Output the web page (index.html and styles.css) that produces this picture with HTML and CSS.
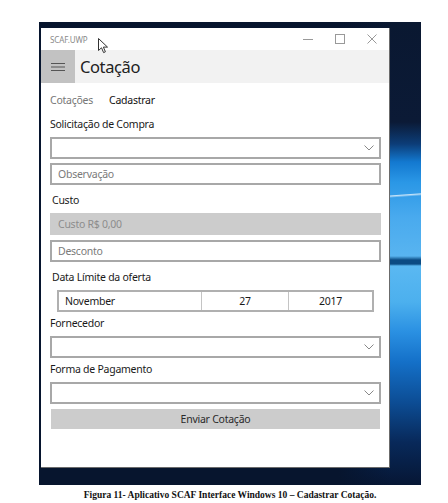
FILE: index.html
```html
<!DOCTYPE html>
<html lang="pt">
<head>
<meta charset="utf-8">
<link rel="stylesheet" href="styles.css">
</head>
<body>
<div class="desktop">
  <div class="window">
    <div class="titlebar">
      <span class="app-name">SCAF.UWP</span>
      <div class="controls">
        <svg class="ctl" width="12" height="12" viewBox="0 0 12 12"><path d="M1 6.5H11" stroke="#999" stroke-width="1"/></svg>
        <svg class="ctl" width="12" height="12" viewBox="0 0 12 12"><rect x="1.5" y="1.5" width="9" height="9" fill="none" stroke="#999" stroke-width="1"/></svg>
        <svg class="ctl" width="12" height="12" viewBox="0 0 12 12"><path d="M1.5 1.5L10.5 10.5M10.5 1.5L1.5 10.5" stroke="#999" stroke-width="1"/></svg>
      </div>
    </div>
    <div class="header">
      <div class="hamburger">
        <svg width="14" height="8" viewBox="0 0 14 8"><path d="M0 0.5H14M0 4H14M0 7.5H14" stroke="#555" stroke-width="1"/></svg>
      </div>
      <h1 class="page-title">Cotação</h1>
    </div>
    <div class="content">
      <div class="tabs">
        <span class="tab">Cotações</span>
        <span class="tab active">Cadastrar</span>
      </div>
      <div class="label l-first">Solicitação de Compra</div>
      <div class="field combo f-first"><svg class="chev" width="10" height="6" viewBox="0 0 10 6"><path d="M0.5 0.5L5 5L9.5 0.5" fill="none" stroke="#888" stroke-width="1"/></svg></div>
      <div class="field f-obs"><span class="ph">Observação</span></div>
      <div class="label l-ind l-custo">Custo</div>
      <div class="field disabled f-mid"><span class="ph dis">Custo R$ 0,00</span></div>
      <div class="field f-mid"><span class="ph">Desconto</span></div>
      <div class="label l-ind l-custo">Data Límite da oferta</div>
      <div class="date f-mid">
        <div class="seg month">November</div>
        <div class="seg day">27</div>
        <div class="seg year">2017</div>
      </div>
      <div class="label l-tight">Fornecedor</div>
      <div class="field combo f-mid"><svg class="chev" width="10" height="6" viewBox="0 0 10 6"><path d="M0.5 0.5L5 5L9.5 0.5" fill="none" stroke="#888" stroke-width="1"/></svg></div>
      <div class="label l-tight">Forma de Pagamento</div>
      <div class="field combo f-mid"><svg class="chev" width="10" height="6" viewBox="0 0 10 6"><path d="M0.5 0.5L5 5L9.5 0.5" fill="none" stroke="#888" stroke-width="1"/></svg></div>
      <div class="button">Enviar Cotação</div>
    </div>
    <svg class="cursor" width="11" height="16" viewBox="0 0 11 16"><path d="M0.5 0.5V12.5L3.5 9.8L5.6 14.6L7.4 13.8L5.4 9.1H9.5Z" fill="#fff" stroke="#333" stroke-width="1" stroke-linejoin="round"/></svg>
  </div>
</div>
<p class="caption">Figura 11- Aplicativo SCAF Interface Windows 10 – Cadastrar Cotação.</p>
</body>
</html>
```

FILE: styles.css
```css
html, body {
  margin: 0;
  padding: 0;
  background: #ffffff;
}
body {
  width: 448px;
  height: 503px;
  overflow: hidden;
  font-family: "Noto Sans", "Open Sans", sans-serif;
}
.desktop {
  margin: 22px 0 0 39px;
  width: 382px;
  height: 463px;
  box-sizing: border-box;
  padding: 6px 0 0 2px;
  background:
    linear-gradient(to right, #07152e 0px, #07152e 300px, rgba(7,21,46,0) 352px),
    linear-gradient(176deg, transparent 0 197px, rgba(255,255,255,0.7) 198px, transparent 200px, transparent 100%),
    linear-gradient(to bottom,
      #0a1831 0px, #0b1a36 100px, #0c3d78 122px, #1379d0 140px, #2a97e6 160px,
      #49aaee 195px, #58b4f0 234px, #0b4b83 238px, #0b4b83 242px, #5ab8f2 244px,
      #4cb0ee 280px, #2a90e2 310px, #1470c8 340px, #0c4d95 380px, #08295a 420px, #061634 463px);
}
.window {
  position: relative;
  width: 349px;
  height: 440px;
  box-sizing: border-box;
  background: #ffffff;
  border-right: 1px solid #6b6b6b;
  border-bottom: 1px solid #6b6b6b;
  display: flex;
  flex-direction: column;
}
.titlebar {
  height: 22px;
  display: flex;
  align-items: center;
  justify-content: space-between;
  padding-left: 9px;
}
.app-name {
  font-size: 8px;
  color: #8a8a8a;
  letter-spacing: -0.1px;
}
.controls {
  display: flex;
  align-items: center;
  gap: 20px;
  padding-right: 11px;
}
.ctl { display: block; }
.header {
  height: 33px;
  background: #f2f2f2;
  display: flex;
  align-items: center;
}
.hamburger {
  width: 34px;
  height: 33px;
  background: #c2c2c2;
  display: flex;
  align-items: center;
  justify-content: center;
}
.hamburger svg { display: block; }
.page-title {
  margin: 0 0 0 5px;
  font-size: 16.5px;
  font-weight: 400;
  color: #222;
  letter-spacing: -0.4px;
}
.content {
  padding: 0 8px 0 9px;
  display: flex;
  flex-direction: column;
  letter-spacing: -0.25px;
}
.tabs {
  height: 20px;
  margin-top: 7px;
  display: flex;
  align-items: center;
  gap: 16px;
  font-size: 10.5px;
}
.tab { color: #767676; }
.tab.active { color: #111; }
.label {
  height: 16px;
  line-height: 16px;
  font-size: 10.5px;
  color: #1a1a1a;
}
.l-first { margin-top: 6px; }
.l-ind { padding-left: 2px; }
.l-custo { margin-top: 7px; }
.l-tight { margin-top: 3px; }
.field {
  position: relative;
  height: 22px;
  box-sizing: border-box;
  border: 2px solid #a8a8a8;
  display: flex;
  align-items: center;
  padding-left: 6px;
}
.f-first { margin-top: 5px; }
.f-obs { margin-top: 4px; }
.f-mid { margin-top: 5px; }
.field.disabled {
  background: #cccccc;
  border-color: #cccccc;
}
.ph {
  font-size: 10.5px;
  color: #7a7a7a;
}
.ph.dis { color: #8c8c8c; }
.chev {
  position: absolute;
  right: 5px;
  top: 6px;
}
.date {
  height: 22px;
  margin-left: 7px;
  margin-right: 7px;
  box-sizing: border-box;
  border: 2px solid #b0b0b0;
  display: flex;
  font-size: 10.5px;
  color: #1a1a1a;
}
.seg {
  display: flex;
  align-items: center;
}
.month {
  width: 143px;
  padding-left: 6px;
  box-sizing: border-box;
  border-right: 1px solid #c4c4c4;
}
.day {
  width: 86px;
  justify-content: center;
  border-right: 1px solid #c4c4c4;
}
.year {
  flex: 1;
  justify-content: center;
}
.button {
  margin: 5px 1px 0 1px;
  height: 20px;
  background: #cccccc;
  display: flex;
  align-items: center;
  justify-content: center;
  font-size: 10.5px;
  color: #2a2a2a;
}
.cursor {
  position: absolute;
  left: 57px;
  top: 10px;
}
.caption {
  margin: 5px 0 0 39px;
  width: 382px;
  text-align: center;
  font-family: "Liberation Serif", serif;
  font-weight: bold;
  font-size: 9.5px;
  color: #111;
  letter-spacing: 0;
}
```
